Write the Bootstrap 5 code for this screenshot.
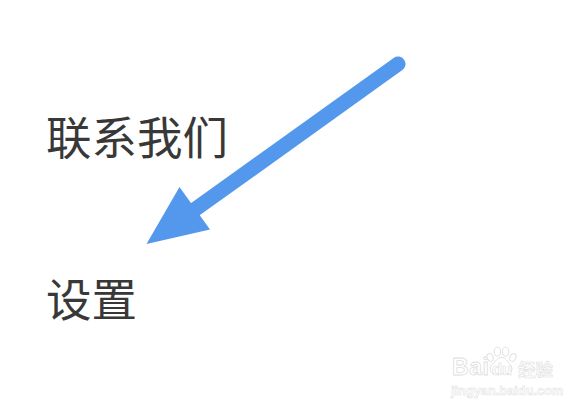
<!DOCTYPE html>
<html lang="zh">
<head>
<meta charset="utf-8">
<title>设置</title>
<link href="https://cdn.jsdelivr.net/npm/bootstrap@5.3.0/dist/css/bootstrap.min.css" rel="stylesheet">
<style>
html,body{width:588px;height:408px;overflow:hidden;background:#fff}
.menu-wrap{padding:108px 0 0 46px;gap:108px;position:relative;height:408px}
.menu-item{font-family:"Noto Sans CJK SC","Liberation Sans",sans-serif;font-size:45.5px;line-height:54px;color:#383838;font-weight:400}
.arrow-svg{position:absolute;left:0;top:0}
.wm{position:absolute;left:451px;top:344px;width:125px;height:54px}
.wm-top,.wm-du,.wm-cn,.wm-url{position:absolute;white-space:nowrap;color:#fff;font-weight:700}
.wm-top,.wm-du,.wm-url{font-family:"Liberation Sans",sans-serif}
.wm-top{font-size:23px;line-height:24px;left:1px;top:11px;-webkit-text-stroke:.8px #dedede;letter-spacing:.6px}
.wm-du{font-size:16.500px;line-height:22px;left:41px;top:14px;-webkit-text-stroke:.6px #dedede}
.wm-cn{font-family:"Noto Sans CJK SC",sans-serif;font-size:17.500px;line-height:22px;left:67px;top:14px;-webkit-text-stroke:.6px #dedede}
.wm-url{font-size:12.800px;line-height:14px;left:0;top:40px;-webkit-text-stroke:.5px #dedede}
.wm-paw{position:absolute;left:35px;top:1px}
</style>
</head>
<body>
<div class="menu-wrap d-flex flex-column">
  <div class="menu-item">联系我们</div>
  <div class="menu-item">设置</div>
  <svg class="arrow-svg" width="588" height="408" viewBox="0 0 588 408" aria-hidden="true">
    <line x1="398" y1="64" x2="190" y2="213" stroke="#5398ec" stroke-width="15" stroke-linecap="round"/>
    <polygon points="146.500,244 179.500,187 210,229.500" fill="#5398ec"/>
  </svg>
  <div class="wm">
    <span class="wm-top">Bai</span>
    <svg class="wm-paw" width="31" height="33" viewBox="3 0 38 36" aria-hidden="true" fill="#fff" stroke="#e0e0e0" stroke-width="1.200">
      <ellipse cx="8" cy="13" rx="3.500" ry="5" transform="rotate(-25 8 13)"/>
      <ellipse cx="17" cy="6" rx="3.800" ry="5.500"/>
      <ellipse cx="27" cy="6" rx="3.800" ry="5.500"/>
      <ellipse cx="36" cy="13" rx="3.500" ry="5" transform="rotate(25 36 13)"/>
      <path d="M22 13c5 0 7 5 11 9 4 5 1 13-6 12-3 0-3-1-5-1s-3 1-6 1c-7 1-10-7-6-12 5-4 7-9 12-9z"/>
    </svg>
    <span class="wm-du">du</span>
    <span class="wm-cn">经验</span>
    <span class="wm-url">jingyan.baidu.com</span>
  </div>
</div>
</body>
</html>
